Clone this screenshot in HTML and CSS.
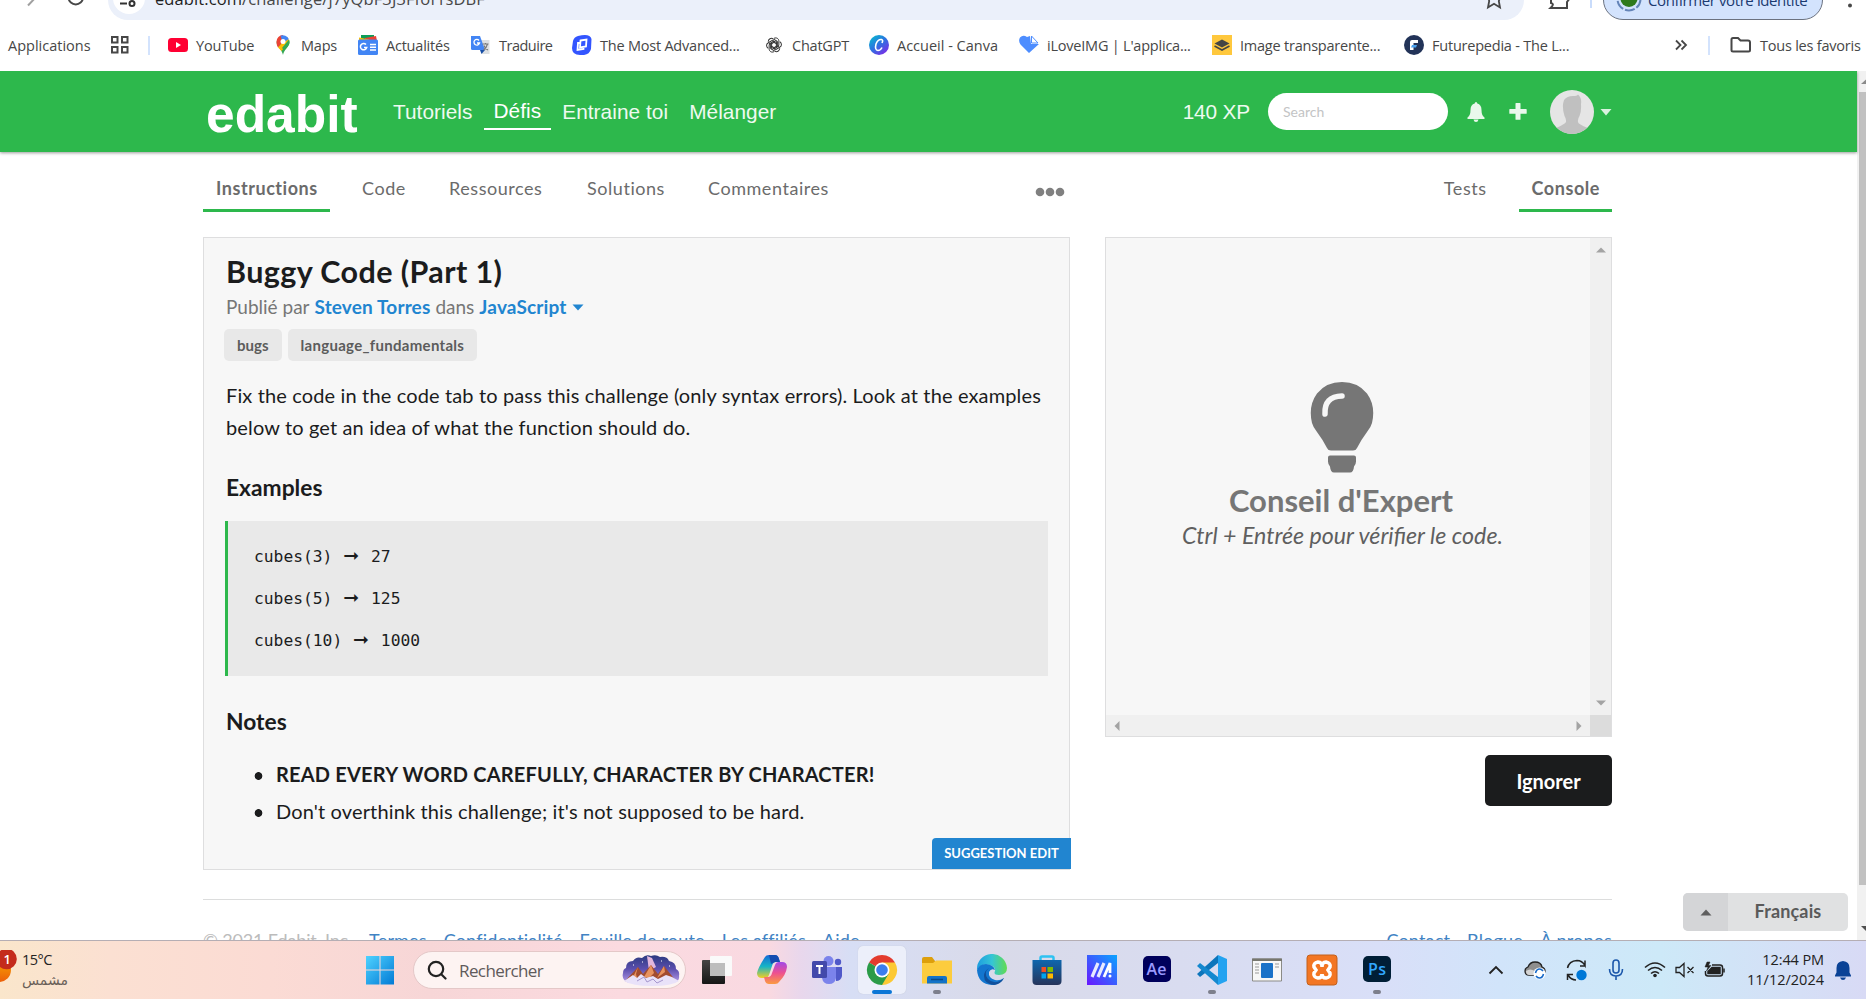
FILE: index.html
```html
<!DOCTYPE html>
<html lang="fr">
<head>
<meta charset="utf-8">
<title>Buggy Code (Part 1)</title>
<link rel="stylesheet" href="styles.css">
</head>
<body>
<div class="toolbar">
  <svg class="toolbar-nav" width="108" height="20" viewBox="0 0 108 20" fill="none" stroke="#474747" stroke-width="2"><path d="M28 5.500L37-4" stroke="#a0a0a0"/><path d="M68.500-2a7.300 7.300 0 0 0 14.500 0"/></svg>
  <div class="omnibox">
    <span class="site-info"><svg width="30" height="14" viewBox="0 0 30 14" fill="none" stroke="#333" stroke-width="2"><path d="M7 3.500h7"/><circle cx="19" cy="3.500" r="2.500"/></svg></span>
    <span class="url"><b>edabit.com</b>/challenge/j7yQbF3J3Ffof1sDBF</span>
    <svg class="star" width="20" height="14" viewBox="0 0 20 14" fill="none" stroke="#474747" stroke-width="1.800"><path d="M4.500-2L5.200 1 4 7.500l6-3.800 6 3.800L14.800 1l1.200-3"/></svg>
  </div>
  <svg class="ext" width="50" height="20" viewBox="0 0 50 20" fill="none"><path d="M3 0v3q4 1-.5 5h16.500V2l3-4" stroke="#474747" stroke-width="2"/><path d="M43 0v8" stroke="#c9dcfb" stroke-width="2"/></svg>
  <div class="identity"><svg width="28" height="20" viewBox="0 0 28 20"><circle cx="14" cy="-1" r="11.500" fill="none" stroke="#6484b8" stroke-width="2" stroke-dasharray="10 2"/><circle cx="14" cy="-1.500" r="8.500" fill="#2f7a1d"/></svg><span>Confirmer votre identité</span></div>
  <svg class="kebab" width="14" height="14" viewBox="0 0 14 14"><circle cx="7" cy="5.500" r="2" fill="#474747"/></svg>
</div>

<div class="bookmarks">
  <span>Applications</span>
  <svg width="20" height="20" viewBox="0 0 20 20" fill="none" stroke="#474747" stroke-width="2"><path d="M2 2h5.500v5.500H2zM12 2h5.500v5.500H12zM2 12h5.500v5.500H2zM12 12h5.500v5.500H12z"/></svg>
  <i class="sep"></i>
  <a class="bm"><svg width="20" height="20" viewBox="0 0 20 20"><rect y="3" width="20" height="14" rx="3.500" fill="#ff0033"/><path d="M8 7l5 3-5 3z" fill="#fff"/></svg><span>YouTube</span></a>
  <a class="bm"><svg width="20" height="20" viewBox="0 0 20 20"><path d="M10 20C9 14 3.500 12 3.500 6.500h13C16.500 12 11 14 10 20z" fill="#34a853"/><path d="M3.500 6.500A6.500 6.500 0 0 1 10 0l-1 8-4 4.500C4 11 3.500 9 3.500 6.500z" fill="#ea4335"/><path d="M5 12.500l9-10.500 2.500 4-8 10z" fill="#fbbc04"/><path d="M7.500.8A6.500 6.500 0 0 1 15.800 4L10 8z" fill="#4285f4"/><path d="M16 4.500c2 5-2 8-4.500 11L9 13z" fill="#34a853"/><circle cx="10" cy="6.500" r="2.500" fill="#fff"/></svg><span>Maps</span></a>
  <a class="bm"><svg width="20" height="20" viewBox="0 0 20 20"><path d="M3 0h13v6H3z" fill="#0c9d58"/><path d="M7 3l11-2 1 5H7z" fill="#ea4335"/><path d="M1 2.500l10 2V7H1z" fill="#fbbc04"/><rect y="4.500" width="20" height="15.500" rx="1.500" fill="#4285f4"/><path d="M8 9.500A3.200 3.200 0 1 0 8.700 12.500H6M12 9.500h6M12 12.300h6M12 15h6" stroke="#fff" stroke-width="1.500" fill="none"/></svg><span>Actualités</span></a>
  <a class="bm"><svg width="20" height="20" viewBox="0 0 20 20"><path d="M7 5h11.500v14H11z" fill="#dcdfe2"/><path d="M0 1h9l5 14H1.500Q0 15 0 13.500z" fill="#4285f4"/><path d="M9 15h5l-3.500 4z" fill="#174ea6"/><path d="M8 5.500A2.800 2.800 0 1 0 8.500 8H6" stroke="#fff" stroke-width="1.300" fill="none"/><path d="M11.500 9h6M14.500 8v1M16.500 9q-1 4-4 6M13 10.500q1 3 4 4.500" stroke="#777" stroke-width="1.100" fill="none"/></svg><span class="bm-tight">Traduire</span></a>
  <a class="bm"><svg width="20" height="20" viewBox="0 0 20 20"><path d="M6 1Q18-2 19.500 4L19 14Q17 21 8 20 0 20 0 13L1 6Q2 2 6 1z" fill="#3355ff"/><path d="M8.500 5.500l6-1-.5 7-6 1zM8 8H6l-.5 7 6-1v-2" fill="none" stroke="#fff" stroke-width="1.800"/></svg><span>The Most Advanced...</span></a>
  <a class="bm"><svg width="20" height="20" viewBox="-2 -2 24 24" fill="none" stroke="#333" stroke-width="1.200"><g id="petal"><path d="M10 2c3-1.500 6 .5 5.800 3.500v5l-3 1.700V7L8 4.200"/></g><use href="#petal" transform="rotate(60 10 10)"/><use href="#petal" transform="rotate(120 10 10)"/><use href="#petal" transform="rotate(180 10 10)"/><use href="#petal" transform="rotate(240 10 10)"/><use href="#petal" transform="rotate(300 10 10)"/></svg><span>ChatGPT</span></a>
  <a class="bm"><svg width="20" height="20" viewBox="0 0 20 20"><defs><linearGradient id="cv" x1="0" y1="0" x2=".8" y2="1"><stop stop-color="#00c4cc"/><stop offset=".5" stop-color="#2a75e0"/><stop offset="1" stop-color="#7d2ae8"/></linearGradient></defs><circle cx="10" cy="10" r="10" fill="url(#cv)"/><path d="M13 8q1.500-3-.5-3.500Q9 4 7 9q-1.500 6 2 6.500 2.500 0 4-3" fill="none" stroke="#fff" stroke-width="1.600"/></svg><span class="bm-loose">Accueil - Canva</span></a>
  <a class="bm"><svg width="20" height="20" viewBox="0 0 20 20"><path d="M10 18L1.500 9.500Q-1 6 1 2.500 4-.5 8 2l3-1 1 8h8z" fill="#4d8dff"/><path d="M12.500 1l6.500 7h-6.500z" fill="#fff" stroke="#4d8dff"/></svg><span>iLoveIMG | L'applica...</span></a>
  <a class="bm"><svg width="20" height="20" viewBox="0 0 20 20"><path d="M0 0h20v20H0z" fill="#ffc83d"/><path d="M10 4.500l7.500 4L10 12.500l-7.500-4z" fill="#454545"/><path d="M2.500 11l7.500 4 7.500-4" fill="none" stroke="#454545" stroke-width="1.600"/></svg><span>Image transparente...</span></a>
  <a class="bm"><svg width="20" height="20" viewBox="0 0 20 20"><circle cx="10" cy="10" r="10" fill="#223358"/><path d="M6 15V7q0-2 2-2h6v3H9.500v7z" fill="#fff"/><path d="M8 10h5l-1 2.500H7z" fill="#4aa3f0"/></svg><span>Futurepedia - The L...</span></a>
  <svg width="14" height="20" viewBox="0 0 14 20" fill="none" stroke="#474747" stroke-width="1.800"><path d="M1 5.500L5.500 10 1 14.500M6.500 5.500L11 10l-4.500 4.500"/></svg>
  <i class="sep"></i>
  <a class="bm bm-all"><svg width="22" height="20" viewBox="0 0 22 20" fill="none" stroke="#474747" stroke-width="2"><path d="M1.500 4.500q0-1.500 1.500-1.500h5l2.500 2.500H18q2 0 2 2V15q0 1.500-1.500 1.500H3q-1.500 0-1.500-1.500z"/></svg><span>Tous les favoris</span></a>
</div>

<div class="viewport">
  <div class="site">
    <header class="header">
      <a class="logo">edabit</a>
      <nav class="nav"><a>Tutoriels</a><a class="nav-on">Défis</a><a>Entraine toi</a><a>Mélanger</a></nav>
      <div class="account">
        <span class="xp">140 XP</span>
        <span class="search"><span>Search</span></span>
        <svg class="bell" width="18" height="20" viewBox="0 0 18 20" fill="#e9f8ec"><path d="M9 0q1.200 0 1.300 1.500Q14.500 2.500 14.500 8q0 5.500 3 7.500v1.500H.5v-1.500q3-2 3-7.500 0-5.500 4.200-6.500Q7.800 0 9 0zM6.500 17.500h5Q11 20 9 20t-2.500-2.500z"/></svg>
        <svg class="plus" width="18" height="17" viewBox="0 0 18 17" fill="#e9f8ec"><path d="M6.500.500q0-.5.500-.5h4q.5 0 .5.500V6H17q.7 0 .7.500v3.700q0 .5-.7.500h-5.500v5.500q0 .5-.5.500H7q-.5 0-.5-.5v-5.500H1q-.7 0-.7-.5V6.500Q.3 6 1 6h5.500z"/></svg>
        <svg class="avatar" width="44" height="44" viewBox="0 0 44 44"><defs><clipPath id="av"><circle cx="22" cy="22" r="22"/></clipPath></defs><g clip-path="url(#av)"><path d="M0 0h44v44H0z" fill="#e5e5e5"/><path d="M14 10q3-4 9-4 4 0 5-1.500Q32 8 31 14q.5 8-1.500 12-2 3-1.500 6 0 2 10 6v8H6v-8q9-4 10-6 .500-3-1.500-6Q12.500 20 13 14z" fill="#c0c0c0"/></g></svg>
        <svg width="12" height="8" viewBox="0 0 12 8" fill="#d9f2de"><path d="M.5 1h11L6 7.500z"/></svg>
      </div>
    </header>

    <div class="tabs">
      <div class="tabs-left"><a class="tab-on">Instructions</a><a>Code</a><a>Ressources</a><a>Solutions</a><a>Commentaires</a><svg width="30" height="10" viewBox="0 0 30 10" fill="#808080"><circle cx="5" cy="5" r="4.300"/><circle cx="15" cy="5" r="4.300"/><circle cx="25" cy="5" r="4.300"/></svg></div>
      <div class="tabs-right"><a>Tests</a><a class="tab-on">Console</a></div>
    </div>

    <main class="columns">
      <section class="panel">
        <h1>Buggy Code (Part 1)</h1>
        <p class="byline"><span>Publié par</span> <b>Steven Torres</b> <span>dans</span> <b>JavaScript</b><svg width="12" height="7" viewBox="0 0 12 7" fill="#2185d0"><path d="M.5.500h11L6 6.500z"/></svg></p>
        <div class="tags"><span>bugs</span><span>language_fundamentals</span></div>
        <p class="lead">Fix the code in the code tab to pass this challenge (only syntax errors). Look at the examples<br>below to get an idea of what the function should do.</p>
        <h2>Examples</h2>
        <div class="code"><div>cubes(3) <i>➞</i> 27</div><div>cubes(5) <i>➞</i> 125</div><div>cubes(10) <i>➞</i> 1000</div></div>
        <h2 class="notes-title">Notes</h2>
        <ul class="notes"><li><b>READ EVERY WORD CAREFULLY, CHARACTER BY CHARACTER!</b></li><li><span>Don't overthink this challenge; it's not supposed to be hard.</span></li></ul>
        <a class="suggest">SUGGESTION EDIT</a>
      </section>
      <section class="side">
        <div class="console">
          <div class="tip">
            <svg width="64" height="91" viewBox="0 0 64 91"><path d="M32 0Q48 0 57 11.500 66 24 62 41q-1 4-5 9-6 8-10 16-1 2.500-4 2.500H21q-3 0-4-2.500-4-8-10-16-4-5-5-9Q-2 24 7 11.500 16 0 32 0zM20 73.500h24q2 0 2 2v4q0 3-2 5-.5 6-4 6H24q-3.500 0-4-6-2-2-2-5v-4q0-2 2-2z" fill="#767676"/><path d="M15 32Q14 14.500 32 14" fill="none" stroke="#f7f7f7" stroke-width="5.500" stroke-linecap="round"/></svg>
            <h3>Conseil d'Expert</h3>
            <p>Ctrl + Entrée pour vérifier le code.</p>
          </div>
          <div class="vbar"><svg width="10" height="6" viewBox="0 0 10 6" fill="#a3a3a3"><path d="M0 5.500L5 .5l5 5z"/></svg><svg width="10" height="6" viewBox="0 0 10 6" fill="#a3a3a3"><path d="M0 .5h10l-5 5z"/></svg></div>
          <div class="hbar"><svg width="6" height="10" viewBox="0 0 6 10" fill="#a3a3a3"><path d="M5.500 0v10l-5-5z"/></svg><svg width="6" height="10" viewBox="0 0 6 10" fill="#a3a3a3"><path d="M.5 0v10l5-5z"/></svg></div>
          <div class="corner"></div>
        </div>
        <a class="skip">Ignorer</a>
      </section>
    </main>

    <footer class="footer">
      <div class="foot-left"><span>© 2021 Edabit, Inc.</span><a>Termes</a><a>Confidentialité</a><a>Feuille de route</a><a>Les affiliés</a><a>Aide</a></div>
      <div class="foot-right"><a>Contact</a><a>Blogue</a><a>À propos</a></div>
    </footer>
    <div class="lang"><span class="lang-up"><svg width="12" height="7" viewBox="0 0 12 7" fill="#5f5f5f"><path d="M.5 6.500L6 .5l5.500 6z"/></svg></span><b>Français</b></div>
  </div>
  <div class="page-scroll"><svg width="9" height="21" viewBox="0 0 9 21" fill="#8a8a8a"><path d="M4 13l5-4.500V13z"/></svg><i></i><svg width="9" height="55" viewBox="0 0 9 55" fill="#505050"><path d="M4 41l5 5v-5z"/></svg></div>
</div>

<div class="taskbar">
  <div class="weather"><svg width="20" height="40" viewBox="0 0 20 40"><defs><linearGradient id="sun" x1="0" y1="0" x2="0" y2="1"><stop stop-color="#f7a800"/><stop offset="1" stop-color="#ec5f0a"/></linearGradient></defs><circle cx="-1" cy="20" r="12" fill="url(#sun)"/><circle cx="6.500" cy="9" r="10.300" fill="#c42b1c"/><text x="3.500" y="14" font-family="Open Sans" font-size="13" font-weight="600" fill="#fff">1</text></svg><div class="temps"><span>15°C</span><span class="arabic">مشمس</span></div></div>
  <svg class="win" width="30" height="30" viewBox="0 0 30 30"><defs><linearGradient id="wn" x1="0" y1="0" x2="1" y2="1"><stop stop-color="#4fd2ff"/><stop offset="1" stop-color="#0078d4"/></linearGradient><mask id="wm"><path d="M1 1h13.500v13.500H1zM15.500 1h13.500v13.500H15.500zM1 15.500h13.500V29.500H1zM15.500 15.500h13.500V29.500H15.500z" fill="#fff"/></mask></defs><path d="M1 1h29v29H1z" fill="url(#wn)" mask="url(#wm)"/></svg>
  <div class="finder"><svg width="20" height="20" viewBox="0 0 20 20" fill="none" stroke="#222" stroke-width="2.200" stroke-linecap="round"><circle cx="9" cy="9" r="7.200"/><path d="M14.500 14.500l4 4"/></svg><span>Rechercher</span>
    <svg class="peaks" width="58" height="34" viewBox="0 0 58 34"><defs><linearGradient id="pk" x1="0" y1="0" x2="0" y2="1"><stop stop-color="#2b3a80"/><stop offset=".5" stop-color="#5c4fae"/><stop offset="1" stop-color="#b79be8"/></linearGradient></defs><path d="M8 30Q-1 28 1 20q0-4 3-5 0-7 7-7 3-5 9-3 4-4 9-2 5-2 9 1 7-1 9 4 7 1 7 8 4 2 3 7 1 5-6 7z" fill="url(#pk)"/><path d="M25 3l5 2 4 9-7 4z" fill="#e2b7dd"/><path d="M3 28l13-14 5 7 8-9 7 9 6-8 12 15q-25 8-51 0z" fill="#a24c30"/><path d="M16 14l-2 7 1 4-5 1zM29 12l3 8-5 5-5-1zM42 13l1 6-8 6z" fill="#e8935f"/><path d="M2 28l9-6 4 3 4-4 5 4 7-2 5 3 8-4 6 2 7 4q-7 5-27 5T2 28z" fill="#e9e2f9"/><path d="M15 28l7-4 3 5 6-3 4 4 6-3" stroke="#a596cd" fill="none"/><path d="M11 12h1M20 9h1M39 8h1M47 13h1" stroke="#fff"/></svg>
  </div>
  <div class="apps">
    <span><svg width="32" height="32" viewBox="0 0 32 32"><defs><linearGradient id="tv" x1="0" y1="0" x2="0" y2="1"><stop stop-color="#454545"/><stop offset="1" stop-color="#161616"/></linearGradient></defs><rect x="1" y="6" width="23" height="24" rx="1" fill="url(#tv)"/><rect x="9" y="2" width="22" height="20" rx="1" fill="#fafafa"/><path d="M9 9h15v13H9z" fill="#bdbdbd"/></svg></span>
    <span><svg width="32" height="32" viewBox="0 0 32 32"><defs><linearGradient id="c1" x1="0" y1="0" x2="0" y2="1"><stop stop-color="#1669d8"/><stop offset=".5" stop-color="#16b5c5"/><stop offset="1" stop-color="#f2cf22"/></linearGradient><linearGradient id="c2" x1="0" y1="0" x2="0" y2="1"><stop stop-color="#a04ae8"/><stop offset=".5" stop-color="#ee5090"/><stop offset="1" stop-color="#fb9b40"/></linearGradient></defs><path d="M9 3q1-2 4-2h6q3 0 4 4l1 3h-4q-3 0-4 4l-3 9q-1 3-4 3H6q-5 0-5-5Q2 14 9 3z" fill="url(#c1)"/><path d="M23 28q-1 2-4 2h-6q-3 0-4-3l-1-4h4q3 0 4-4l3-8q1-3 4-3h3q5 0 5 5-1 8-8 15z" fill="url(#c2)"/><path d="M13 1h6q3 0 4 4l1 3h-5l-4 2z" fill="#164cb0"/></svg></span>
    <span><svg width="32" height="32" viewBox="0 0 32 32"><circle cx="17.500" cy="7" r="5" fill="#7b83eb"/><circle cx="27" cy="8" r="3.200" fill="#5059c9"/><path d="M24 13h7v9q-1 5-6 5z" fill="#5059c9"/><path d="M11 13h14v11q-1 6-7 6t-7-6z" fill="#7b83eb"/><rect x="1" y="7" width="15" height="17" rx="1.500" fill="#4349ab"/><path d="M5 12h7M8.500 12v8" stroke="#fff" stroke-width="2"/></svg></span>
    <span class="app-on"><svg width="32" height="32" viewBox="0 0 32 32"><path d="M16 16L3 8.500A15 15 0 0 1 29 8.500z" fill="#e33b2e"/><path d="M16 16V8.500h13A15 15 0 0 1 16 31z" fill="#fcc934"/><path d="M16 16L3 8.500A15 15 0 0 0 16 31l6.500-11z" fill="#2a9b48"/><circle cx="16" cy="16" r="7.500" fill="#fff"/><circle cx="16" cy="16" r="5.800" fill="#3b7ded"/></svg></span>
    <span class="run"><svg width="32" height="32" viewBox="0 0 32 32"><path d="M1 5q0-2 2-2h8l3 4v6H1z" fill="#dd9f0c"/><path d="M1 9h11l3-2.500h16V29.500H1z" fill="#fccc3e"/><path d="M6 29.500V24q0-2 2-2h16q2 0 2 2v5.500z" fill="#1373c8"/><path d="M10 25.500h12" stroke="#0a4a87" stroke-width="1.500"/></svg></span>
    <span><svg width="32" height="32" viewBox="0 0 32 32"><defs><linearGradient id="e1" x1="0" y1="0" x2="1" y2="0"><stop stop-color="#1d9de0"/><stop offset=".5" stop-color="#35c5d5"/><stop offset="1" stop-color="#62dc50"/></linearGradient></defs><path d="M1 16A15 15 0 0 1 31 14q0 7-8 7-6 0-4-4 1-4-5-6-9-2-13 5z" fill="url(#e1)"/><path d="M1 16q2-6 9-6 8 1 9 6-4-2-6 2-1 6 6 8 5 1 9-2-4 7-12 7Q2 30 1 16z" fill="#1376cf"/><path d="M13 14q-6 5-1 11 7 7 16-1-3 6-10 7Q8 30 8 22q0-5 5-8z" fill="#11509b"/></svg></span>
    <span><svg width="32" height="32" viewBox="0 0 32 32"><defs><linearGradient id="st" x1="0" y1="0" x2="0" y2="1"><stop stop-color="#0f67ae"/><stop offset="1" stop-color="#26345a"/></linearGradient></defs><path d="M9.500 9V4q0-1.500 1.500-1.500h10q1.500 0 1.500 1.500v5" fill="none" stroke="#2ec2f2" stroke-width="2.500"/><path d="M1.500 6h29v21q0 4-4 4h-21q-4 0-4-4z" fill="url(#st)"/><path d="M10.500 13H15v5h-4.500z" fill="#f25022"/><path d="M16.500 13H22v5h-5.500z" fill="#7fba00"/><path d="M10.500 19.500H15v5h-4.500z" fill="#00a4ef"/><path d="M16.500 19.500H22v5h-5.500z" fill="#ffb900"/></svg></span>
    <span><svg width="32" height="32" viewBox="0 0 32 32"><defs><linearGradient id="ml" x1="0" y1="1" x2="1" y2="0"><stop stop-color="#6a16ff"/><stop offset="1" stop-color="#0aa5ff"/></linearGradient></defs><path d="M1 1h30v30H1z" fill="url(#ml)"/><path d="M6 23l6-14M12 23l6-14" stroke="#e8eaff" stroke-width="3.200"/><path d="M18 23l6-14v10" stroke="#fff" stroke-width="2.800" fill="none"/><circle cx="24" cy="22" r="1.500" fill="#fff"/></svg></span>
    <span><svg width="32" height="32" viewBox="0 0 32 32"><rect x="2" y="2" width="28" height="26" rx="5" fill="#00005b"/><text x="5.500" y="20.500" font-family="Open Sans" font-size="16" font-weight="600" fill="#9999ff" textLength="20">Ae</text></svg></span>
    <span class="run"><svg width="32" height="32" viewBox="0 0 32 32"><path d="M22 1l9 4v22l-9 4z" fill="#24a3f0"/><path d="M22 1v8L4 23l-3-3z" fill="#0d75bb"/><path d="M22 31v-8L4 9l-3 3z" fill="#1488cf"/></svg></span>
    <span><svg width="32" height="32" viewBox="0 0 32 32"><path d="M1.500 5h29v22h-29z" fill="#f7f7f7" stroke="#8b8b87"/><path d="M1 4.500h30V7H1z" fill="#77776f"/><rect x="10" y="9" width="12" height="15" rx="1" fill="#1a72c8"/><path d="M4 10h4M4 13h4M4 16h4M4 19h4M24 10h4M24 13h4" stroke="#999"/></svg></span>
    <span><svg width="32" height="32" viewBox="0 0 32 32"><rect x="1" y="1" width="30" height="30" rx="3" fill="#f37623" stroke="#c2601c"/><path d="M12 8q4 0 4 5 0-5 4-5 5 1 4 5l-2 3 2 3q1 4-4 5-4 0-4-4 0 4-4 4-5-1-4-5l2-3-2-3q-1-4 4-5z" fill="none" stroke="#fff" stroke-width="3.500"/></svg></span>
    <span class="run"><svg width="32" height="32" viewBox="0 0 32 32"><rect x="2" y="2" width="28" height="26" rx="5" fill="#001e36"/><text x="7" y="20.500" font-family="Open Sans" font-size="16" font-weight="600" fill="#31a8ff" textLength="18">Ps</text></svg></span>
  </div>
  <div class="tray">
    <svg width="16" height="10" viewBox="0 0 16 10" fill="none" stroke="#222" stroke-width="1.800"><path d="M1.500 8.500L8 2l6.500 6.500"/></svg>
    <svg width="22" height="20" viewBox="0 0 22 20"><path d="M5 15q-4 0-4-4 0-3 3-4 2-5 7-5 6 0 7 5 3 1 3 4t-4 4z" fill="#8e8e8e" stroke="#222" stroke-width="1.300"/><path d="M5 15q-3 0-3-4 4-3 9 0v4z" fill="#d4d4d4"/><circle cx="15.500" cy="13.500" r="6" fill="#fff"/><path d="M11.500 13q1-4 4-4 2 0 3.500 2M19.500 14q-1 4-4 4-2 0-3.500-2" fill="none" stroke="#1467c8" stroke-width="1.600"/></svg>
    <svg width="22" height="22" viewBox="0 0 22 22" fill="none" stroke="#222" stroke-width="1.500"><path d="M1.500 9Q3 2 11 1.500q5 0 8 5V1.500M19.500 7H14M1.500 21v-5.500H7M2 16q3 5 8 5"/><circle cx="15.500" cy="16" r="5.200" fill="#0078d7" stroke="none"/></svg>
    <svg width="16" height="22" viewBox="0 0 16 22" fill="none" stroke="#1b57ab" stroke-width="1.600"><rect x="5" y="1" width="6" height="13" rx="3"/><path d="M1.500 10q0 7 6.500 7t6.500-7M8 17v4"/></svg>
    <svg class="wifi" width="22" height="18" viewBox="0 0 22 18" fill="none" stroke="#222" stroke-width="1.600"><path d="M1 6.500Q11-2.500 21 6.500M4 9.500q7-6 14 0M7 12.500q4-3.500 8 0"/><circle cx="11" cy="14.500" r="1.800" fill="#222" stroke="none"/></svg>
    <svg width="20" height="16" viewBox="0 0 20 16" fill="none" stroke="#222" stroke-width="1.300"><path d="M1 5.500h3.500L9 1.500v13l-4.500-4H1zM12.500 5l6 6M18.500 5l-6 6"/></svg>
    <svg width="22" height="18" viewBox="0 0 22 18" fill="none" stroke="#222" stroke-width="1.500"><path d="M8 4h8q2.500 0 2.500 2.500v6q0 2.500-2.500 2.500H4q-2.500 0-2.500-2.500V10"/><path d="M4 10.500L8 6.500h8v6H4z" fill="#222"/><path d="M20 7.500v4"/><path d="M3 1L1 6h3L2.500 10 7 4.500H4.500L6 1z" fill="#222" stroke-width=".5"/></svg>
  </div>
  <div class="clock"><span>12:44 PM</span><span class="date">11/12/2024</span></div>
  <svg class="note" width="18" height="20" viewBox="0 0 18 20" fill="#0a4296"><path d="M9 1q6.500.500 6.500 7v4.500l1.500 3v1H1v-1l1.500-3V8Q2.500 1.500 9 1zM6 17.500h6Q11 20 9 20t-3-2.500z"/></svg>
</div>
</body>
</html>
```
FILE: styles.css
```css
* { box-sizing: border-box; }
body {
  margin: 0; width: 1866px; height: 999px; overflow: hidden; background: #fff;
  display: grid; grid-template-rows: 20px 51px 869px 59px;
  font-family: Lato, "Liberation Sans", sans-serif; color: #1b1c1d; position: relative;
}
h1, h2, h3, p, ul { margin: 0; padding: 0; }
svg { display: block; flex: none; }
span, a, b { white-space: nowrap; }

/* browser toolbar */
.toolbar { display: flex; height: 20px; overflow: hidden; font: 16px/20px "Open Sans", sans-serif; }
.omnibox { width: 1416px; height: 20px; background: #ebf0fa; border-radius: 0 0 20px 20px; display: flex; }
.site-info { width: 32px; height: 32px; margin: -18px 0 0 5px; border-radius: 50%; background: #fff; display: flex; padding-top: 18px; }
.url { margin: -11px 0 0 10px; flex: 1; font-size: 16.500px; color: #474747; letter-spacing: .1px; }
.url b { font-weight: 400; color: #1f1f1f; }
.star { margin-right: 20px; }
.ext { margin-left: 24px; }
.identity { margin-left: 5px; width: 220px; height: 40px; margin-top: -20px; background: #d3e3fd; border: 1px solid #6b7280; border-radius: 20px; display: flex; padding: 19px 0 0 11px; gap: 5px; }
.identity span { margin-top: -10px; letter-spacing: -.4px; color: #1b3a70; font-size: 15px; }
.kebab { margin-left: 20px; }

/* bookmarks bar */
.bookmarks {
  display: grid; align-items: center; padding: 0 0 1px 8px; font: 14.500px/20px "Open Sans", sans-serif; color: #474747; letter-spacing: -.22px;
  grid-template-columns: 102px 38px 20px 105px 85px 113px 101px 192px 105px 150px 193px 192px 271px 33px 22px auto;
}
.bookmarks > span, .bm span { padding-top: 1px; }
.bookmarks > span { letter-spacing: 0; }
.bm { display: flex; gap: 8px; align-items: center; }
.bm .bm-tight { letter-spacing: -.5px; }
.bm .bm-loose { letter-spacing: 0; }
.sep { width: 2px; height: 19px; background: #d3e3fd; }

/* site */
.viewport { display: flex; height: 869px; overflow: hidden; }
.site { width: 1857px; position: relative; }
.header { height: 81px; background: #2db84c; box-shadow: 0 1px 3px rgba(0,0,0,.4); display: flex; align-items: center; padding-left: 205px; font-family: "Liberation Sans", Arial, sans-serif; color: #eefaf0; }
.logo { font-size: 51.500px; line-height: 60px; font-weight: 700; color: #fff; width: 178px; padding: 4px 0 0 1px; }
.nav { display: flex; gap: 1px; font-size: 20.800px; line-height: 26px; align-items: center; letter-spacing: .06px; }
.nav a { padding: 0 10px; }
.nav .nav-on { padding-bottom: 4px; border-bottom: 2px solid #fff; color: #fff; margin-top: 4px; }
.account { margin-left: auto; padding-right: 245px; display: flex; align-items: center; font-size: 20.800px; }
.xp { letter-spacing: -.15px; }
.search { width: 180px; height: 37px; margin-left: 18px; border-radius: 19px; background: #fff; display: flex; align-items: center; padding-left: 15px; font: 14px Lato; color: #c3c4c5; }
.bell { margin-left: 19px; }
.plus { margin-left: 24px; }
.avatar { margin: 0 6px 0 23px; }

.tabs { margin: 22px 0 0 203px; width: 1409px; height: 38px; display: flex; justify-content: space-between; font-size: 18px; line-height: 28px; color: #6b6b6b; letter-spacing: .55px; }
.tabs-left { display: grid; grid-template-columns: 159px 87px 138px 121px 327px 30px; }
.tabs-left svg { margin-top: 13px; }
.tab-on { font-weight: 700; justify-self: start; height: 38px; padding: 0 12px 0 13px; border-bottom: 3px solid #2db84c; }
.tabs-right { display: flex; gap: 32px; }

.columns { margin: 25px 0 0 203px; width: 1409px; display: flex; justify-content: space-between; align-items: flex-start; }
.panel { width: 867px; height: 633px; border: 1px solid #dededf; background: #f7f7f7; padding: 14px 0 0 22px; position: relative; }
h1 { font-size: 30.500px; line-height: 38px; font-weight: 700; letter-spacing: .4px; }
.byline { font-size: 19px; line-height: 24px; margin-top: 5px; color: #767676; display: flex; gap: 5px; align-items: center; }
.byline b { color: #2185d0; letter-spacing: .15px; }
.tags { display: flex; gap: 6px; margin: 10px 0 0 -2px; font-size: 15px; font-weight: 700; line-height: 32px; color: #5c5c5c; }
.tags span { background: #e8e8e8; border-radius: 5px; padding: 0 13px; }
.tags span + span { letter-spacing: .3px; }
.lead { margin-top: 18px; font-size: 20px; line-height: 32px; letter-spacing: .14px; }
h2 { font-size: 22.800px; line-height: 30px; font-weight: 700; margin-top: 29px; }
.code { margin: 19px 0 0 -1px; width: 823px; height: 155px; background: #e9e9e9; border-left: 3px solid #2db84c; padding: 15px 26px; font: 16.300px/42px "DejaVu Sans Mono", monospace; }
.code div { height: 42px; }
.code i { font: 19px/20px "DejaVu Sans", sans-serif; display: inline-block; width: 19px; margin: 0 -1px 0 1px; }
.notes-title { margin-top: 30px; }
.notes { list-style: none; margin-top: 20px; font-size: 20px; line-height: 36.500px; letter-spacing: .14px; }
.notes li { padding-left: 50px; background: radial-gradient(circle at 32.500px 20px, #1b1c1d 3.500px, transparent 4.200px); }
.notes b { letter-spacing: .2px; }
.suggest { position: absolute; right: -2px; bottom: 0; width: 139px; height: 31px; background: #2185d0; border-radius: 4px 0 0; color: #fff; font-size: 13px; font-weight: 700; line-height: 30px; text-align: center; }

.console { width: 507px; height: 500px; border: 1px solid #dededf; background: #f7f7f7; display: grid; grid-template: 477px 21px / 484px 21px; }
.tip { display: flex; flex-direction: column; align-items: center; padding: 144px 14px 0 0; color: #767676; }
.tip h3 { font-size: 31px; line-height: 36px; margin-top: 9px; }
.tip p { font-size: 23.200px; line-height: 30px; font-style: italic; color: #5f5f5f; margin: 2px 0 0 3px; }
.tip svg { margin-left: 2px; }
.vbar, .hbar { background: #f0f0f0; display: flex; justify-content: space-between; align-items: center; }
.vbar { flex-direction: column; padding: 9px 0; }
.hbar { padding: 0 8px; }
.corner { background: #dcdcdc; }
.skip { display: block; margin: 18px 0 0 auto; width: 127px; height: 51px; border-radius: 5px; background: #1b1c1d; color: #fff; font-size: 20px; font-weight: 700; line-height: 52px; text-align: center; }

.footer { margin: 29px 0 0 203px; width: 1409px; border-top: 1px solid #dcdddd; display: flex; justify-content: space-between; font-size: 18px; line-height: 24px; padding-top: 28px; color: #bcbcbc; }
.foot-left, .foot-right { display: flex; gap: 17px; }
.foot-left span { letter-spacing: -.17px; }
.footer a { color: #4183c4; letter-spacing: .17px; }
.lang { position: absolute; left: 1683px; top: 822px; width: 165px; height: 38px; background: #e0e1e2; border-radius: 5px; display: flex; overflow: hidden; font-size: 18px; line-height: 36px; color: #5a5a5a; }
.lang-up { width: 45px; background: #d4d5d7; display: grid; place-items: center; }
.lang b { flex: 1; text-align: center; letter-spacing: .15px; }
.page-scroll { width: 9px; background: #f1f1f1; }
.page-scroll i { display: block; height: 793px; margin-left: 2px; background: #c1c1c1; }

/* taskbar */
.taskbar {
  display: flex; align-items: center; border-top: 1px solid #b5aeb4; font-family: "Open Sans", sans-serif; position: relative; z-index: 2;
  background: linear-gradient(90deg, #fae6cb 0, #fbe0d2 110px, #fbdbd4 270px, #f7d6d7 430px, #fbdae0 620px, #f9d9e1 770px, #e9d7ec 800px, #d7def5 850px, #d9dae9 1000px, #d9dcf0 1180px, #d9dff8 1380px, #d1e4fa 1500px, #cde9f8 1660px, #d5dff6 1800px, #d8daf5 1866px);
}
.weather { width: 365px; display: flex; }
.temps { margin-left: 2px; display: flex; flex-direction: column; font-size: 14.500px; line-height: 20px; color: #222; letter-spacing: -.5px; }
.arabic { font: 14px/20px "DejaVu Sans"; color: #6a5f58; letter-spacing: 0; }
.finder { margin-left: 18px; width: 273px; height: 38px; border-radius: 19px; background: #fdf3f2; border: 1px solid #e4c8c8; display: flex; align-items: center; padding-left: 13px; font-size: 17px; color: #605a5a; }
.finder span { margin-left: 12px; letter-spacing: -.6px; }
.peaks { margin: 0 5px 0 auto; }
.apps { display: flex; margin-left: 7px; gap: 7px; }
.apps > span { width: 48px; height: 48px; display: grid; place-items: center; position: relative; border-radius: 5px; }
.app-on { background: #eceffa; box-shadow: 0 0 1px #b9bdcc; }
.run::after, .app-on::after { content: ""; position: absolute; bottom: 0; left: 20px; width: 8px; height: 4px; border-radius: 2px; background: #7d7f8c; }
.app-on::after { width: 20px; left: 14px; background: #0b76d6; }
.tray { display: flex; align-items: center; margin-left: 87px; gap: 20px; }
.tray svg:nth-child(n+6) { margin-left: -11px; }
.clock { width: 98px; display: flex; flex-direction: column; align-items: flex-end; font-size: 14.500px; line-height: 20px; color: #222; letter-spacing: -.1px; }
.date { letter-spacing: 0; }
.note { margin-left: 10px; }
```
